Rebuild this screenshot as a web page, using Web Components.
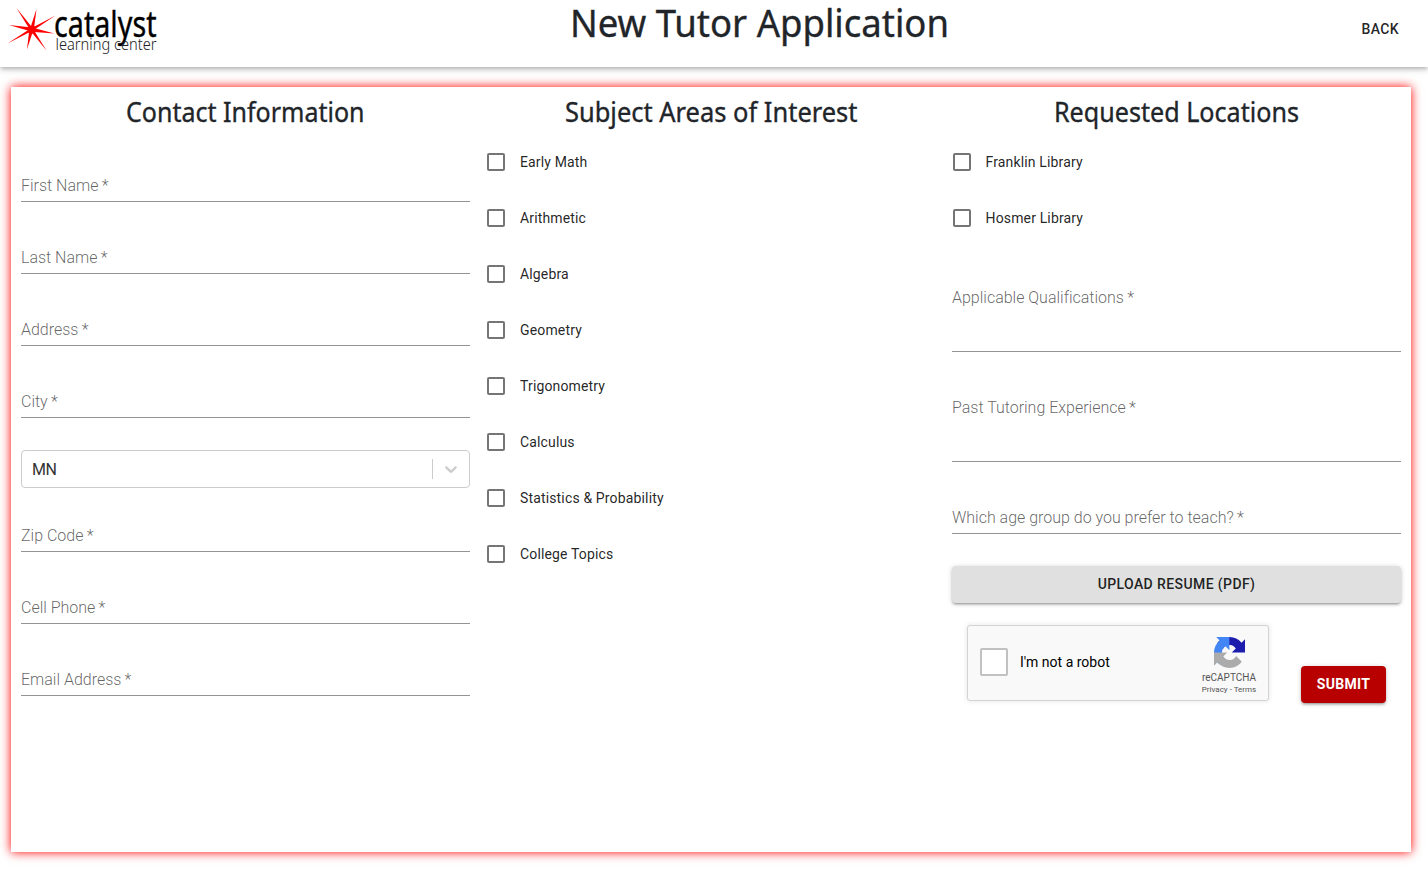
<!DOCTYPE html>
<html lang="en">
<head>
<meta charset="utf-8">
<title>New Tutor Application</title>
<style>
body{margin:0;background:#fff;font-family:Roboto,"Liberation Sans",sans-serif;color:#212529;height:871px;overflow:hidden}
</style>
</head>
<body>
<tutor-page></tutor-page>
<script>
const define=(name,html,setup)=>customElements.define(name,class extends HTMLElement{
  constructor(){super();this.attachShadow({mode:'open'});}
  connectedCallback(){this.shadowRoot.innerHTML=typeof html==='function'?html(this):html;if(setup)setup(this);}
});

// One line of text set to an exact width and font size.
define('fit-text',el=>{
  const a=n=>el.getAttribute(n);
  return `<style>:host{display:block;flex:none}svg{display:block;overflow:visible;margin:0 auto}text{fill:currentColor;stroke:currentColor;stroke-width:.35px;font-family:"Noto Sans","Open Sans",sans-serif;font-size:${a('size')}px}</style>
  <svg width="${a('width')}" height="${a('height')}"><text x="0" y="${a('base')}" textLength="${a('width')}" lengthAdjust="spacingAndGlyphs">${el.textContent}</text></svg>`;
});

define('brand-logo',`<style>:host{display:block}svg{display:block;overflow:visible}text{font-family:"Noto Sans","Open Sans",sans-serif}</style>
<svg width="160" height="60">
<g fill="#f00"><path d="M16.500 8 33 28.600 30.400 30.400Z"/><path d="M36.500 9 33.800 30 30 29Z"/><path d="M55.500 15.500 32.300 31 30.800 28.400Z"/><path d="M54.500 33.500 31 31.700 31.800 27.600Z"/><path d="M46.500 50.500 30.200 30.400 32.800 28.600Z"/><path d="M27 49.500 29.400 29 33.300 30Z"/><path d="M7.500 43.500 30.900 28.200 32.300 30.800Z"/><path d="M9 25 32 27.600 31.200 31.500Z"/><rect x="28" y="26" width="7.500" height="7.500" rx="2"/></g>
<text x="54" y="36.500" font-size="37" font-weight="400" stroke="#000" stroke-width=".4" textLength="102.500" lengthAdjust="spacingAndGlyphs" fill="#000">catalyst</text>
<text x="55.500" y="49.500" font-size="17" font-weight="300" textLength="101" lengthAdjust="spacingAndGlyphs" fill="#222">learning center</text>
</svg>`);

define('app-bar',`<style>:host{display:grid;grid-template-columns:160px 1fr 160px;height:67px;background:#fff;box-shadow:0 2px 4px -1px rgba(0,0,0,.2),0 4px 5px rgba(0,0,0,.1),0 1px 8px rgba(0,0,0,.08)}
.mid{display:flex;justify-content:center}
.mid fit-text{margin-left:90px}
.back{justify-self:end;margin-right:29px;line-height:58px;font-size:14px;font-weight:500;letter-spacing:.4px;color:rgba(0,0,0,.87)}</style>
<brand-logo></brand-logo><div class="mid"><fit-text size="39" width="379" height="60" base="37">New Tutor Application</fit-text></div><div class="back">BACK</div>`);

define('form-column',el=>`<style>:host{display:block;min-width:0}.h{height:39px;padding-top:8px}</style>
<div class="h"><fit-text size="27.500" width="${el.getAttribute('title-width')}" height="39" base="27">${el.getAttribute('heading')}</fit-text></div><slot></slot>`);

define('text-field',`<style>:host{display:block;box-sizing:border-box;height:48px;margin:0 0 24px;padding-top:21px;border-bottom:1px solid #949494;font-weight:300;font-size:16px;line-height:22px;letter-spacing:-.01px;color:rgba(0,0,0,.62);white-space:nowrap}:host([multiline]){height:86px}</style>
<div><slot></slot><span>&#8201;*</span></div>`);

define('check-row',`<style>:host{display:flex;align-items:center;height:56px;font-size:14px;letter-spacing:.15px;color:rgba(0,0,0,.87)}i{box-sizing:border-box;width:18px;height:18px;border:2px solid #757575;border-radius:2px;margin:0 15px 0 .5px}</style><i></i><span><slot></slot></span>`);

define('state-select',`<style>:host{display:flex;align-items:center;box-sizing:border-box;height:38px;border:1px solid #ccc;border-radius:4px;padding-left:10px;margin:32px 0 16px;font-size:16px;letter-spacing:-.5px;color:#333}span{flex:1}b{width:1px;height:20px;background:#ccc}svg{margin:0 8px;fill:#ccc}</style>
<span><slot></slot></span><b></b><svg width="20" height="20" viewBox="0 0 20 20"><path d="M4.516 7.548c0.436-0.446 1.043-0.481 1.576 0l3.908 3.747 3.908-3.747c0.533-0.481 1.141-0.446 1.574 0 0.436 0.445 0.408 1.197 0 1.615-0.406 0.418-4.695 4.502-4.695 4.502-0.217 0.223-0.502 0.335-0.787 0.335s-0.570-0.112-0.789-0.335c0 0-4.287-4.084-4.695-4.502s-0.436-1.170 0-1.615z"/></svg>`);

define('raised-button',`<style>:host{display:flex;align-items:center;justify-content:center;box-sizing:border-box;height:37px;padding-bottom:2px;border-radius:4px;background:#e0e0e0;font-size:14px;font-weight:500;letter-spacing:.4px;color:rgba(0,0,0,.87);box-shadow:0 1px 5px rgba(0,0,0,.2),0 2px 2px rgba(0,0,0,.14),0 3px 1px -2px rgba(0,0,0,.12)}:host([primary]){width:85px;background:#b90000;color:#fff;font-weight:700;letter-spacing:.3px}</style><slot></slot>`);

define('captcha-box',`<style>:host{display:flex;box-sizing:border-box;width:302px;height:76px;background:#f9f9f9;border:1px solid #d3d3d3;border-radius:3px;box-shadow:0 0 4px 1px rgba(0,0,0,.08);color:#000}
i{box-sizing:border-box;width:28px;height:28px;border:2px solid #c1c1c1;border-radius:2px;background:#fff;margin:22px 12px 0}.l{flex:1;font-size:14px;line-height:72px}
.r{width:78px;display:flex;flex-direction:column;align-items:center;color:#555;font-size:10px;line-height:10px}svg{display:block;margin:11px 0 5px}.p{font-size:8px;line-height:10px;margin-top:2px;white-space:nowrap}</style>
<i></i><div class="l">I'm not a robot</div>
<div class="r"><svg width="31" height="31" viewBox="0 0 64 64"><path fill="#1c1cad" d="M64 31.955a33.300 33.300 0 0 0-.03-1.370V4.687l-7.160 7.160C50.949 4.674 42.033.093 32.050.093c-10.389 0-19.618 4.960-25.458 12.640l11.736 11.860a15.550 15.550 0 0 1 4.754-5.334c2.050-1.600 4.952-2.906 8.968-2.906.485 0 .86.057 1.135.163 4.976.393 9.288 3.140 11.828 7.124l-8.307 8.307c10.522-.041 22.408-.066 27.294.005"/><path fill="#4285f4" d="M31.862.094a33.400 33.400 0 0 0-1.370.030H4.594l7.160 7.160C4.580 13.147 0 22.063 0 32.046c0 10.389 4.960 19.618 12.640 25.458L24.500 45.768a15.550 15.550 0 0 1-5.334-4.754c-1.600-2.050-2.906-4.952-2.906-8.968 0-.485.057-.86.163-1.135.393-4.976 3.140-9.288 7.124-11.828l8.307 8.307c-.041-10.522-.066-22.408.005-27.294"/><path fill="#ababab" d="M.001 32.045a33.300 33.300 0 0 0 .030 1.370v25.898l7.160-7.160c5.861 7.173 14.777 11.754 24.760 11.754 10.389 0 19.618-4.960 25.458-12.640L45.673 39.407a15.550 15.550 0 0 1-4.754 5.334c-2.050 1.600-4.952 2.906-8.968 2.906-.485 0-.86-.057-1.135-.163-4.976-.393-9.288-3.140-11.828-7.124l8.307-8.307c-10.522.041-22.408.066-27.294-.005"/></svg><div>reCAPTCHA</div><div class="p">Privacy - Terms</div></div>`);

define('tutor-page',`<style>:host{display:block}
main{display:grid;grid-template-columns:repeat(3,1fr);gap:16.500px;box-sizing:border-box;width:1400px;height:765px;margin:20px 0 0 11px;padding:0 10px;background:#fff;box-shadow:0 0 10px red}
.f{padding-top:20px}.q{padding-top:20px}.send{display:flex;justify-content:space-between;margin:22px 15px 0}.send raised-button{margin-top:41px}.up{margin-top:32px}</style>
<app-bar></app-bar>
<main>
<form-column heading="Contact Information" title-width="238.500"><div class="f">
<text-field>First Name</text-field><text-field>Last Name</text-field><text-field>Address</text-field><text-field>City</text-field>
<state-select>MN</state-select>
<text-field>Zip Code</text-field><text-field>Cell Phone</text-field><text-field>Email Address</text-field></div></form-column>
<form-column heading="Subject Areas of Interest" title-width="292.500">
<check-row>Early Math</check-row><check-row>Arithmetic</check-row><check-row>Algebra</check-row><check-row>Geometry</check-row><check-row>Trigonometry</check-row><check-row>Calculus</check-row><check-row>Statistics &amp; Probability</check-row><check-row>College Topics</check-row></form-column>
<form-column heading="Requested Locations" title-width="245">
<check-row>Franklin Library</check-row><check-row>Hosmer Library</check-row>
<div class="q"><text-field multiline>Applicable Qualifications</text-field><text-field multiline>Past Tutoring Experience</text-field><text-field>Which age group do you prefer to teach?</text-field></div>
<raised-button class="up">UPLOAD RESUME (PDF)</raised-button>
<div class="send"><captcha-box></captcha-box><raised-button primary>SUBMIT</raised-button></div>
</form-column>
</main>`);
</script>
</body>
</html>
